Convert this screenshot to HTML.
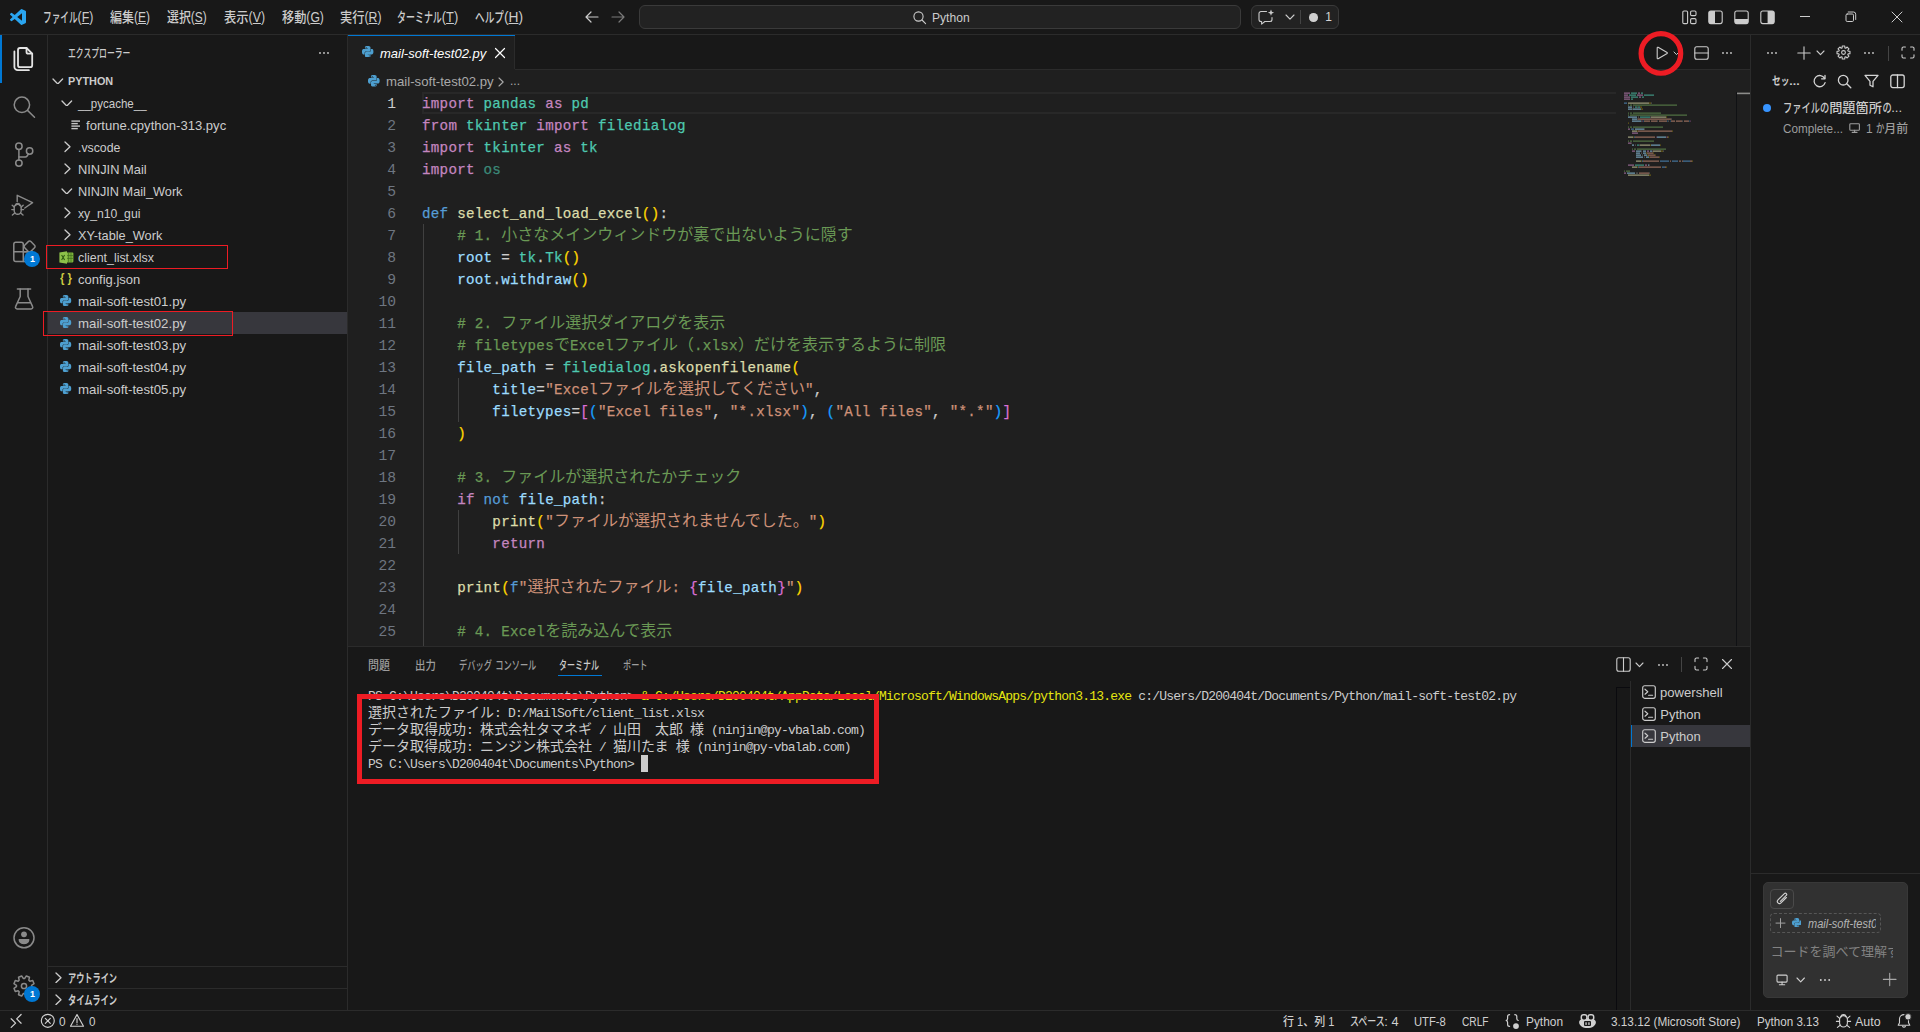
<!DOCTYPE html>
<html lang="ja"><head><meta charset="utf-8"><title>mail-soft-test02.py - Python - Visual Studio Code</title>
<style>
html,body{margin:0;padding:0;background:#181818;}
body{width:1920px;height:1032px;overflow:hidden;position:relative;font-family:"Liberation Sans","Noto Sans CJK JP",sans-serif;}
.b{position:absolute;display:block;}
.t{position:absolute;display:block;white-space:pre;line-height:20px;height:20px;transform-origin:0 50%;}
.cl{position:absolute;left:422px;height:22px;line-height:22px;white-space:pre;font-family:"Liberation Mono","Noto Sans CJK JP",monospace;font-size:14.2px;letter-spacing:0.28px;-webkit-text-stroke:0.25px;color:#ccc;}
.cl i{font-style:normal;font-size:16px;line-height:0;letter-spacing:0;-webkit-text-stroke:0;}
.ln{position:absolute;left:348px;width:48px;text-align:right;height:22px;line-height:22px;font-family:"Liberation Mono","Noto Sans CJK JP",monospace;font-size:14.667px;color:#6e7681;}
.tl{position:absolute;left:368px;height:17px;line-height:17px;white-space:pre;font-family:"Liberation Mono","Noto Sans CJK JP",monospace;font-size:13px;letter-spacing:-0.8px;color:#ccc;}
.tl i{font-style:normal;font-size:14px;line-height:0;letter-spacing:0;}
.t b{font-weight:inherit;display:inline-block;transform:scaleX(.70);transform-origin:0 50%;}
u{text-decoration:underline;text-underline-offset:1px;}
</style></head>
<body>
<div class="b" style="left:0px;top:0px;width:1920px;height:1032px;background:#181818"></div>
<div class="b" style="left:348px;top:70px;width:1403px;height:576px;background:#1f1f1f"></div>
<div class="b" style="left:0px;top:34px;width:1920px;height:1px;background:#2b2b2b"></div>
<div class="b" style="left:47px;top:35px;width:1px;height:975px;background:#2b2b2b"></div>
<div class="b" style="left:347px;top:35px;width:1px;height:975px;background:#2b2b2b"></div>
<div class="b" style="left:1750px;top:35px;width:1px;height:975px;background:#2b2b2b"></div>
<div class="b" style="left:0px;top:1010px;width:1920px;height:1px;background:#2b2b2b"></div>
<div class="b" style="left:348px;top:69px;width:1402px;height:1px;background:#2b2b2b"></div>
<div class="b" style="left:348px;top:646px;width:1402px;height:1px;background:#2b2b2b"></div>
<svg class="b" style="left:10px;top:9px" width="16" height="16" viewBox="0 0 24 24"><path fill="#2aa5f0" d="M23.15 2.587L18.21.21a1.494 1.494 0 0 0-1.705.29l-9.46 8.63-4.12-3.128a.999.999 0 0 0-1.276.057L.327 7.261A1 1 0 0 0 .326 8.74L3.899 12 .326 15.26a1 1 0 0 0 .001 1.479L1.65 17.94a.999.999 0 0 0 1.276.057l4.12-3.128 9.46 8.63a1.492 1.492 0 0 0 1.704.29l4.942-2.377A1.5 1.5 0 0 0 24 20.06V3.939a1.5 1.5 0 0 0-.85-1.352zm-5.146 14.861L10.826 12l7.178-5.448v10.896z"/></svg>
<span class="t" id="t1" style="left:43px;top:7px;font-size:14px;color:#ccc;font-weight:500;transform:scaleX(0.8808);"><b style="margin-right:-16.80px">ファイル</b>(<u>F</u>)</span>
<span class="t" id="t2" style="left:110px;top:7px;font-size:14px;color:#ccc;font-weight:500;transform:scaleX(0.8568);">編集(<u>E</u>)</span>
<span class="t" id="t3" style="left:167px;top:7px;font-size:14px;color:#ccc;font-weight:500;transform:scaleX(0.8503);">選択(<u>S</u>)</span>
<span class="t" id="t4" style="left:223.7px;top:7px;font-size:14px;color:#ccc;font-weight:500;transform:scaleX(0.8782);">表示(<u>V</u>)</span>
<span class="t" id="t5" style="left:281.5px;top:7px;font-size:14px;color:#ccc;font-weight:500;transform:scaleX(0.8687);">移動(<u>G</u>)</span>
<span class="t" id="t6" style="left:339.8px;top:7px;font-size:14px;color:#ccc;font-weight:500;transform:scaleX(0.8743);">実行(<u>R</u>)</span>
<span class="t" id="t7" style="left:397.4px;top:7px;font-size:14px;color:#ccc;font-weight:500;transform:scaleX(0.9147);"><b style="margin-right:-21.00px">ターミナル</b>(<u>T</u>)</span>
<span class="t" id="t8" style="left:475px;top:7px;font-size:14px;color:#ccc;font-weight:500;transform:scaleX(0.9841);"><b style="margin-right:-12.60px">ヘルプ</b>(<u>H</u>)</span>
<svg class="b" style="left:584px;top:10px;" width="16" height="14" viewBox="0 0 16 14" fill="none" stroke="#ccc" stroke-width="1.2" stroke-linecap="round" stroke-linejoin="round"><path d="M14 7H2M7 2L2 7l5 5"/></svg>
<svg class="b" style="left:610px;top:10px;" width="16" height="14" viewBox="0 0 16 14" fill="none" stroke="#7a7a7a" stroke-width="1.2" stroke-linecap="round" stroke-linejoin="round"><path d="M2 7h12M9 2l5 5-5 5"/></svg>
<div class="b" style="left:639px;top:5px;width:602px;height:24px;box-sizing:border-box;background:#222222;border:1px solid #3a3a3a;border-radius:6px"></div>
<svg class="b" style="left:912px;top:10px;" width="15" height="15" viewBox="0 0 15 15" fill="none" stroke="#ccc" stroke-width="1.1" stroke-linecap="round" stroke-linejoin="round"><circle cx="6.5" cy="6.5" r="4.6"/><path d="M10 10l3.6 3.6"/></svg>
<span class="t" id="t9" style="left:932px;top:7.5px;font-size:12px;color:#ccc;transform:scaleX(1.0064);">Python</span>
<div class="b" style="left:1251px;top:5px;width:88px;height:24px;box-sizing:border-box;background:#222222;border:1px solid #3a3a3a;border-radius:6px"></div>
<svg class="b" style="left:1257px;top:9px;" width="20" height="17" viewBox="0 0 20 17" fill="none" stroke="#ccc" stroke-width="1.1" stroke-linecap="round" stroke-linejoin="round"><path d="M9.5 2.5H4a2 2 0 0 0-2 2v6a2 2 0 0 0 2 2h0.6v2.6l3.2-2.6H13a2 2 0 0 0 2-2V8.5"/><path fill="#ccc" stroke="none" d="M14 0.6l.9 2.2 2.2.9-2.2.9-.9 2.2-.9-2.2-2.2-.9 2.2-.9z"/></svg>
<svg class="b" style="left:1284.5px;top:14.42px;" width="10" height="6.16" viewBox="0 0 10 6.16" fill="none" stroke="#ccc" stroke-width="1.1" stroke-linecap="round" stroke-linejoin="round"><path d="M1 1 L5 5.16 L9 1"/></svg>
<div class="b" style="left:1300px;top:10px;width:1px;height:14px;background:#444"></div>
<div class="b" style="left:1309.3px;top:13px;width:8.6px;height:8.6px;background:#d0d0d0;border-radius:50%"></div>
<span class="t" id="t10" style="left:1325.2px;top:7.2px;font-size:12px;color:#d4d4d4;">1</span>
<svg class="b" style="left:1681.5px;top:10px;" width="16" height="15" viewBox="0 0 16 15" fill="none" stroke="#ccc" stroke-width="1.1" stroke-linecap="round" stroke-linejoin="round"><rect x="0.800" y="1" width="4.800" height="12.600" rx="1.200"/><rect x="8.600" y="1" width="5.400" height="4.600" rx="1.200"/><rect x="8.600" y="8.600" width="5.400" height="5" rx="1.200"/></svg>
<svg class="b" style="left:1707.5px;top:10px;" width="16" height="15" viewBox="0 0 16 15" fill="none" stroke="#ccc" stroke-width="1.1" stroke-linecap="round" stroke-linejoin="round"><rect x="0.800" y="1" width="13.400" height="12.600" rx="2"/><path fill="#ccc" stroke="none" d="M2.600 1h4.400v12.600h-4.400a1.800 1.800 0 0 1-1.800-1.800V2.800A1.800 1.800 0 0 1 2.600 1z"/></svg>
<svg class="b" style="left:1733.5px;top:10px;" width="16" height="15" viewBox="0 0 16 15" fill="none" stroke="#ccc" stroke-width="1.1" stroke-linecap="round" stroke-linejoin="round"><rect x="0.800" y="1" width="13.400" height="12.600" rx="2"/><path fill="#ccc" stroke="none" d="M0.800 9h13.400v2.800a1.800 1.800 0 0 1-1.800 1.800H2.600a1.800 1.800 0 0 1-1.800-1.800z"/></svg>
<svg class="b" style="left:1759.5px;top:10px;" width="16" height="15" viewBox="0 0 16 15" fill="none" stroke="#ccc" stroke-width="1.1" stroke-linecap="round" stroke-linejoin="round"><rect x="0.800" y="1" width="13.400" height="12.600" rx="2"/><path fill="#ccc" stroke="none" d="M7.600 1h4.800a1.800 1.800 0 0 1 1.800 1.800v9a1.800 1.800 0 0 1-1.800 1.800h-4.800z"/></svg>
<div class="b" style="left:1800px;top:16px;width:10px;height:1px;background:#ccc"></div>
<svg class="b" style="left:1845px;top:11px;" width="12" height="12" viewBox="0 0 12 12" fill="none" stroke="#ccc" stroke-width="1" stroke-linecap="round" stroke-linejoin="round"><rect x="1" y="3" width="7.5" height="7.5" rx="1.2"/><path d="M3.2 1h5.3a2.2 2.2 0 0 1 2.2 2.2v5.3"/></svg>
<svg class="b" style="left:1891px;top:11px;" width="12" height="12" viewBox="0 0 12 12" fill="none" stroke="#ccc" stroke-width="1" stroke-linecap="round" stroke-linejoin="round"><path d="M1 1l10 10M11 1L1 11"/></svg>
<div class="b" style="left:0px;top:35px;width:2px;height:48px;background:#0078d4"></div>
<svg class="b" style="left:10px;top:44px;" width="28" height="30" viewBox="10 44 28 30" fill="none" stroke="#e4e4e4" stroke-width="1.8" stroke-linecap="round" stroke-linejoin="round"><path d="M20 48h6.500l5.700 5.700v11.500a2 2 0 0 1-2 2H20a2 2 0 0 1-2-2V50a2 2 0 0 1 2-2z"/><path d="M26.500 48v3.900a1.800 1.800 0 0 0 1.800 1.800h3.900"/><path d="M14.400 51.500v15.400a3.300 3.300 0 0 0 3.300 3.300h11.200"/></svg>
<svg class="b" style="left:10px;top:92px;" width="28" height="30" viewBox="10 92 28 30" fill="none" stroke="#8a8a8a" stroke-width="1.5" stroke-linecap="round" stroke-linejoin="round"><circle cx="21.900" cy="104.800" r="7.700"/><path d="M27.500 110.400l7 6.800"/></svg>
<svg class="b" style="left:10px;top:140px;" width="28" height="30" viewBox="10 140 28 30" fill="none" stroke="#8a8a8a" stroke-width="1.5" stroke-linecap="round" stroke-linejoin="round"><circle cx="18.900" cy="146.300" r="3.200"/><circle cx="29.600" cy="151" r="3.200"/><circle cx="18.900" cy="163.100" r="3.200"/><path d="M18.900 149.500v10.400"/><path d="M28.500 154l-1.600 2.200a2 2 0 0 1-1.600.8H18.900"/></svg>
<svg class="b" style="left:9px;top:190px;" width="29" height="30" viewBox="9 190 29 30" fill="none" stroke="#8a8a8a" stroke-width="1.4" stroke-linecap="round" stroke-linejoin="round"><path d="M17.200 201.500v-6.200l15.400 7.300-7.800 5.400"/><path d="M14.200 207.800a3.500 3.500 0 0 1 7 0v3a3.500 3.500 0 0 1-7 0z"/><path d="M15.600 205.600a2.100 2.100 0 0 1 4.200 0"/><path d="M14.200 207l-2-1.700M21.200 207l2-1.700M14.200 209.600h-2.400M21.200 209.600h2.400M14.800 213l-2.400 2M20.600 213l2.400 2"/></svg>
<svg class="b" style="left:10px;top:237px;" width="28" height="29" viewBox="10 237 28 29" fill="none" stroke="#8a8a8a" stroke-width="1.5" stroke-linecap="round" stroke-linejoin="round"><path d="M23.300 261.400H15.800a2 2 0 0 1-2-2V244.300a2 2 0 0 1 2-2h5.500a2 2 0 0 1 2 2z"/><path d="M13.800 251.700h18.700"/><path d="M23.300 251.700h7.200a2 2 0 0 1 2 2v5.700a2 2 0 0 1-2 2h-7.200"/><path d="M28.300 241.600a1.800 1.800 0 0 1 2.600 0l3.600 3.600a1.800 1.800 0 0 1 0 2.600l-3.600 3.600a1.800 1.800 0 0 1-2.600 0l-3.600-3.600a1.800 1.800 0 0 1 0-2.600z"/></svg>
<div class="b" style="left:24.1px;top:251.1px;width:16px;height:16px;background:#0078d4;border-radius:50%"></div>
<span class="t" id="t11" style="left:29.9px;top:249.1px;font-size:9px;color:#fff;font-weight:700;">1</span>
<svg class="b" style="left:10px;top:285px;" width="28" height="28" viewBox="10 285 28 28" fill="none" stroke="#8a8a8a" stroke-width="1.5" stroke-linecap="round" stroke-linejoin="round"><path d="M17.400 288.900h13.200"/><path d="M20.200 288.900v7.600L15.600 306.600a1.600 1.600 0 0 0 1.500 2.300h14a1.600 1.600 0 0 0 1.500-2.300L28 296.500v-7.600"/><path d="M17.900 302.800h12.500"/></svg>
<svg class="b" style="left:10px;top:924px;" width="28" height="28" viewBox="10 924 28 28" fill="none" stroke="#8a8a8a" stroke-width="1.5" stroke-linecap="round" stroke-linejoin="round"><circle cx="24" cy="937.800" r="10"/><circle cx="24" cy="934.300" r="2.900" fill="#8a8a8a" stroke="none"/><path fill="#8a8a8a" stroke="none" d="M18.700 939h10.600v1.300c0 2.400-2.400 3.900-5.300 3.900s-5.300-1.500-5.300-3.900z"/></svg>
<svg class="b" style="left:10px;top:972px;" width="28" height="28" viewBox="10 972 28 28" fill="none" stroke="#8a8a8a" stroke-width="1.5" stroke-linecap="round" stroke-linejoin="round"><path d="M34.04 988.32L32.73 991.46L29.86 990.83L28.83 991.86L29.46 994.73L26.32 996.04L24.73 993.57L23.27 993.57L21.68 996.04L18.54 994.73L19.17 991.86L18.14 990.83L15.27 991.46L13.96 988.32L16.43 986.73L16.43 985.27L13.96 983.68L15.27 980.54L18.14 981.17L19.17 980.14L18.54 977.27L21.68 975.96L23.27 978.43L24.73 978.43L26.32 975.96L29.46 977.27L28.83 980.14L29.86 981.17L32.73 980.54L34.04 983.68L31.57 985.27L31.57 986.73Z"/><circle cx="24" cy="986" r="2.600"/></svg>
<div class="b" style="left:24.1px;top:985.8px;width:16px;height:16px;background:#0078d4;border-radius:50%"></div>
<span class="t" id="t12" style="left:29.9px;top:983.8px;font-size:9px;color:#fff;font-weight:700;">1</span>
<span class="t" id="t13" style="left:67.8px;top:44.3px;font-size:12px;color:#ccc;font-weight:500;transform:scaleX(0.9319);"><b style="margin-right:-28.80px">エクスプローラー</b></span>
<svg class="b" style="left:317px;top:51.3px" width="14" height="4" viewBox="0 0 14 4"><g fill="#ccc"><circle cx="3" cy="2" r="0.9"/><circle cx="7" cy="2" r="0.9"/><circle cx="11" cy="2" r="0.9"/></g></svg>
<svg class="b" style="left:52.3px;top:77.504px;" width="11.6" height="6.992" viewBox="0 0 11.6 6.992" fill="none" stroke="#ccc" stroke-width="1.3" stroke-linecap="round" stroke-linejoin="round"><path d="M1 1 L5.8 5.992 L10.6 1"/></svg>
<span class="t" id="t14" style="left:68.2px;top:71px;font-size:11px;color:#ccc;font-weight:700;transform:scaleX(0.9860);">PYTHON</span>
<div class="b" style="left:48px;top:312px;width:299px;height:22px;background:#37373d"></div>
<svg class="b" style="left:61.2px;top:99.504px;" width="11.6" height="6.992" viewBox="0 0 11.6 6.992" fill="none" stroke="#ccc" stroke-width="1.3" stroke-linecap="round" stroke-linejoin="round"><path d="M1 1 L5.8 5.992 L10.6 1"/></svg>
<span class="t" id="t15" style="left:78.1px;top:93.5px;font-size:13px;color:#ccc;transform:scaleX(0.8869);">__pycache__</span>
<svg class="b" style="left:71px;top:119.5px" width="10" height="10" viewBox="0 0 10 10"><g fill="#c5c5c5"><rect x="0.4" y="0.4" width="8.6" height="1.4"/><rect x="0.4" y="2.9" width="6.4" height="1.4"/><rect x="0.4" y="5.4" width="8.6" height="1.4"/><rect x="0.4" y="7.9" width="6.4" height="1.4"/></g></svg>
<span class="t" id="t16" style="left:86.2px;top:115.5px;font-size:13px;color:#ccc;transform:scaleX(1.0051);">fortune.cpython-313.pyc</span>
<svg class="b" style="left:63.604px;top:141.2px;" width="6.992" height="11.6" viewBox="0 0 6.992 11.6" fill="none" stroke="#ccc" stroke-width="1.3" stroke-linecap="round" stroke-linejoin="round"><path d="M1 1 L5.992 5.8 L1 10.6"/></svg>
<span class="t" id="t17" style="left:78.1px;top:137.5px;font-size:13px;color:#ccc;transform:scaleX(0.9462);">.vscode</span>
<svg class="b" style="left:63.604px;top:163.2px;" width="6.992" height="11.6" viewBox="0 0 6.992 11.6" fill="none" stroke="#ccc" stroke-width="1.3" stroke-linecap="round" stroke-linejoin="round"><path d="M1 1 L5.992 5.8 L1 10.6"/></svg>
<span class="t" id="t18" style="left:78.1px;top:159.5px;font-size:13px;color:#ccc;transform:scaleX(0.9893);">NINJIN Mail</span>
<svg class="b" style="left:61.2px;top:187.504px;" width="11.6" height="6.992" viewBox="0 0 11.6 6.992" fill="none" stroke="#ccc" stroke-width="1.3" stroke-linecap="round" stroke-linejoin="round"><path d="M1 1 L5.8 5.992 L10.6 1"/></svg>
<span class="t" id="t19" style="left:78.1px;top:181.5px;font-size:13px;color:#ccc;transform:scaleX(0.9796);">NINJIN Mail_Work</span>
<svg class="b" style="left:63.604px;top:207.2px;" width="6.992" height="11.6" viewBox="0 0 6.992 11.6" fill="none" stroke="#ccc" stroke-width="1.3" stroke-linecap="round" stroke-linejoin="round"><path d="M1 1 L5.992 5.8 L1 10.6"/></svg>
<span class="t" id="t20" style="left:78.1px;top:203.5px;font-size:13px;color:#ccc;transform:scaleX(0.9383);">xy_n10_gui</span>
<svg class="b" style="left:63.604px;top:229.2px;" width="6.992" height="11.6" viewBox="0 0 6.992 11.6" fill="none" stroke="#ccc" stroke-width="1.3" stroke-linecap="round" stroke-linejoin="round"><path d="M1 1 L5.992 5.8 L1 10.6"/></svg>
<span class="t" id="t21" style="left:78.1px;top:225.5px;font-size:13px;color:#ccc;transform:scaleX(0.9802);">XY-table_Work</span>
<svg class="b" style="left:59px;top:250.8px" width="15" height="13" viewBox="0 0 15 13"><rect x="6" y="1.6" width="8.4" height="9.8" rx="0.8" fill="#7fb43c"/><g stroke="#3d6a1c" stroke-width="0.7"><path d="M6 4.6h8.4M6 7.4h8.4M9.6 1.6v9.8M12 1.6v9.8"/></g><path d="M0.4 1.6L8 0.3v12.4L0.4 11.4z" fill="#8dc149"/><path d="M2.6 4l3 5M5.6 4l-3 5" stroke="#2f5a14" stroke-width="1.1"/></svg>
<span class="t" id="t22" style="left:78.1px;top:247.5px;font-size:13px;color:#ccc;transform:scaleX(0.9551);">client_list.xlsx</span>
<span class="t" id="t23" style="left:59.8px;top:267.9px;font-size:12.5px;color:#cbcb41;font-weight:700;transform:scaleX(0.9089);">{ }</span>
<span class="t" id="t24" style="left:78.1px;top:269.5px;font-size:13px;color:#ccc;">config.json</span>
<svg class="b" style="left:60.4px;top:295.3px" width="11.2" height="11.2" viewBox="0 0 24 24"><path fill="#4d9fd0" d="M14.25.18l.9.2.73.26.59.3.45.32.34.34.25.34.16.33.1.3.04.26.02.2-.01.13V8.5l-.05.63-.13.55-.21.46-.26.38-.3.31-.33.25-.35.19-.35.14-.33.1-.3.07-.26.04-.21.02H8.77l-.69.05-.59.14-.5.22-.41.27-.33.32-.27.35-.2.36-.15.37-.1.35-.07.32-.04.27-.02.21v3.06H3.17l-.21-.03-.28-.07-.32-.12-.35-.18-.36-.26-.36-.36-.35-.46-.32-.59-.28-.73-.21-.88-.14-1.05-.05-1.23.06-1.22.16-1.04.24-.87.32-.71.36-.57.4-.44.42-.33.42-.24.4-.16.36-.1.32-.05.24-.01h.16l.06.01h8.16v-.83H6.18l-.01-2.75-.02-.37.05-.34.11-.31.17-.28.25-.26.31-.23.38-.2.44-.18.51-.15.58-.12.64-.1.71-.06.77-.04.84-.02 1.27.05zm-6.3 1.98l-.23.33-.08.41.08.41.23.34.33.22.41.09.41-.09.33-.22.23-.34.08-.41-.08-.41-.23-.33-.33-.22-.41-.09-.41.09zm13.09 3.95l.28.06.32.12.35.18.36.27.36.35.35.47.32.59.28.73.21.88.14 1.04.05 1.23-.06 1.23-.16 1.04-.24.86-.32.71-.36.57-.4.45-.42.33-.42.24-.4.16-.36.09-.32.05-.24.02-.16-.01h-8.22v.82h5.84l.01 2.76.02.36-.05.34-.11.31-.17.29-.25.25-.31.24-.38.2-.44.17-.51.15-.58.13-.64.09-.71.07-.77.04-.84.01-1.27-.04-1.07-.14-.9-.2-.73-.25-.59-.3-.45-.33-.34-.34-.25-.34-.16-.33-.1-.3-.04-.25-.02-.2.01-.13v-5.34l.05-.64.13-.54.21-.46.26-.38.3-.32.33-.24.35-.2.35-.14.33-.1.3-.06.26-.04.21-.02.13-.01h5.84l.69-.05.59-.14.5-.21.41-.28.33-.32.27-.35.2-.36.15-.36.1-.35.07-.32.04-.28.02-.21V6.07h2.09l.14.01zm-6.47 14.25l-.23.33-.08.41.08.41.23.33.33.23.41.08.41-.08.33-.23.23-.33.08-.41-.08-.41-.23-.33-.33-.23-.41-.08-.41.08z"/></svg>
<span class="t" id="t25" style="left:78.1px;top:291.5px;font-size:13px;color:#ccc;transform:scaleX(1.0179);">mail-soft-test01.py</span>
<svg class="b" style="left:60.4px;top:317.3px" width="11.2" height="11.2" viewBox="0 0 24 24"><path fill="#4d9fd0" d="M14.25.18l.9.2.73.26.59.3.45.32.34.34.25.34.16.33.1.3.04.26.02.2-.01.13V8.5l-.05.63-.13.55-.21.46-.26.38-.3.31-.33.25-.35.19-.35.14-.33.1-.3.07-.26.04-.21.02H8.77l-.69.05-.59.14-.5.22-.41.27-.33.32-.27.35-.2.36-.15.37-.1.35-.07.32-.04.27-.02.21v3.06H3.17l-.21-.03-.28-.07-.32-.12-.35-.18-.36-.26-.36-.36-.35-.46-.32-.59-.28-.73-.21-.88-.14-1.05-.05-1.23.06-1.22.16-1.04.24-.87.32-.71.36-.57.4-.44.42-.33.42-.24.4-.16.36-.1.32-.05.24-.01h.16l.06.01h8.16v-.83H6.18l-.01-2.75-.02-.37.05-.34.11-.31.17-.28.25-.26.31-.23.38-.2.44-.18.51-.15.58-.12.64-.1.71-.06.77-.04.84-.02 1.27.05zm-6.3 1.98l-.23.33-.08.41.08.41.23.34.33.22.41.09.41-.09.33-.22.23-.34.08-.41-.08-.41-.23-.33-.33-.22-.41-.09-.41.09zm13.09 3.95l.28.06.32.12.35.18.36.27.36.35.35.47.32.59.28.73.21.88.14 1.04.05 1.23-.06 1.23-.16 1.04-.24.86-.32.71-.36.57-.4.45-.42.33-.42.24-.4.16-.36.09-.32.05-.24.02-.16-.01h-8.22v.82h5.84l.01 2.76.02.36-.05.34-.11.31-.17.29-.25.25-.31.24-.38.2-.44.17-.51.15-.58.13-.64.09-.71.07-.77.04-.84.01-1.27-.04-1.07-.14-.9-.2-.73-.25-.59-.3-.45-.33-.34-.34-.25-.34-.16-.33-.1-.3-.04-.25-.02-.2.01-.13v-5.34l.05-.64.13-.54.21-.46.26-.38.3-.32.33-.24.35-.2.35-.14.33-.1.3-.06.26-.04.21-.02.13-.01h5.84l.69-.05.59-.14.5-.21.41-.28.33-.32.27-.35.2-.36.15-.36.1-.35.07-.32.04-.28.02-.21V6.07h2.09l.14.01zm-6.47 14.25l-.23.33-.08.41.08.41.23.33.33.23.41.08.41-.08.33-.23.23-.33.08-.41-.08-.41-.23-.33-.33-.23-.41-.08-.41.08z"/></svg>
<span class="t" id="t26" style="left:78.1px;top:313.5px;font-size:13px;color:#ccc;transform:scaleX(1.0179);">mail-soft-test02.py</span>
<svg class="b" style="left:60.4px;top:339.3px" width="11.2" height="11.2" viewBox="0 0 24 24"><path fill="#4d9fd0" d="M14.25.18l.9.2.73.26.59.3.45.32.34.34.25.34.16.33.1.3.04.26.02.2-.01.13V8.5l-.05.63-.13.55-.21.46-.26.38-.3.31-.33.25-.35.19-.35.14-.33.1-.3.07-.26.04-.21.02H8.77l-.69.05-.59.14-.5.22-.41.27-.33.32-.27.35-.2.36-.15.37-.1.35-.07.32-.04.27-.02.21v3.06H3.17l-.21-.03-.28-.07-.32-.12-.35-.18-.36-.26-.36-.36-.35-.46-.32-.59-.28-.73-.21-.88-.14-1.05-.05-1.23.06-1.22.16-1.04.24-.87.32-.71.36-.57.4-.44.42-.33.42-.24.4-.16.36-.1.32-.05.24-.01h.16l.06.01h8.16v-.83H6.18l-.01-2.75-.02-.37.05-.34.11-.31.17-.28.25-.26.31-.23.38-.2.44-.18.51-.15.58-.12.64-.1.71-.06.77-.04.84-.02 1.27.05zm-6.3 1.98l-.23.33-.08.41.08.41.23.34.33.22.41.09.41-.09.33-.22.23-.34.08-.41-.08-.41-.23-.33-.33-.22-.41-.09-.41.09zm13.09 3.95l.28.06.32.12.35.18.36.27.36.35.35.47.32.59.28.73.21.88.14 1.04.05 1.23-.06 1.23-.16 1.04-.24.86-.32.71-.36.57-.4.45-.42.33-.42.24-.4.16-.36.09-.32.05-.24.02-.16-.01h-8.22v.82h5.84l.01 2.76.02.36-.05.34-.11.31-.17.29-.25.25-.31.24-.38.2-.44.17-.51.15-.58.13-.64.09-.71.07-.77.04-.84.01-1.27-.04-1.07-.14-.9-.2-.73-.25-.59-.3-.45-.33-.34-.34-.25-.34-.16-.33-.1-.3-.04-.25-.02-.2.01-.13v-5.34l.05-.64.13-.54.21-.46.26-.38.3-.32.33-.24.35-.2.35-.14.33-.1.3-.06.26-.04.21-.02.13-.01h5.84l.69-.05.59-.14.5-.21.41-.28.33-.32.27-.35.2-.36.15-.36.1-.35.07-.32.04-.28.02-.21V6.07h2.09l.14.01zm-6.47 14.25l-.23.33-.08.41.08.41.23.33.33.23.41.08.41-.08.33-.23.23-.33.08-.41-.08-.41-.23-.33-.33-.23-.41-.08-.41.08z"/></svg>
<span class="t" id="t27" style="left:78.1px;top:335.5px;font-size:13px;color:#ccc;transform:scaleX(1.0179);">mail-soft-test03.py</span>
<svg class="b" style="left:60.4px;top:361.3px" width="11.2" height="11.2" viewBox="0 0 24 24"><path fill="#4d9fd0" d="M14.25.18l.9.2.73.26.59.3.45.32.34.34.25.34.16.33.1.3.04.26.02.2-.01.13V8.5l-.05.63-.13.55-.21.46-.26.38-.3.31-.33.25-.35.19-.35.14-.33.1-.3.07-.26.04-.21.02H8.77l-.69.05-.59.14-.5.22-.41.27-.33.32-.27.35-.2.36-.15.37-.1.35-.07.32-.04.27-.02.21v3.06H3.17l-.21-.03-.28-.07-.32-.12-.35-.18-.36-.26-.36-.36-.35-.46-.32-.59-.28-.73-.21-.88-.14-1.05-.05-1.23.06-1.22.16-1.04.24-.87.32-.71.36-.57.4-.44.42-.33.42-.24.4-.16.36-.1.32-.05.24-.01h.16l.06.01h8.16v-.83H6.18l-.01-2.75-.02-.37.05-.34.11-.31.17-.28.25-.26.31-.23.38-.2.44-.18.51-.15.58-.12.64-.1.71-.06.77-.04.84-.02 1.27.05zm-6.3 1.98l-.23.33-.08.41.08.41.23.34.33.22.41.09.41-.09.33-.22.23-.34.08-.41-.08-.41-.23-.33-.33-.22-.41-.09-.41.09zm13.09 3.95l.28.06.32.12.35.18.36.27.36.35.35.47.32.59.28.73.21.88.14 1.04.05 1.23-.06 1.23-.16 1.04-.24.86-.32.71-.36.57-.4.45-.42.33-.42.24-.4.16-.36.09-.32.05-.24.02-.16-.01h-8.22v.82h5.84l.01 2.76.02.36-.05.34-.11.31-.17.29-.25.25-.31.24-.38.2-.44.17-.51.15-.58.13-.64.09-.71.07-.77.04-.84.01-1.27-.04-1.07-.14-.9-.2-.73-.25-.59-.3-.45-.33-.34-.34-.25-.34-.16-.33-.1-.3-.04-.25-.02-.2.01-.13v-5.34l.05-.64.13-.54.21-.46.26-.38.3-.32.33-.24.35-.2.35-.14.33-.1.3-.06.26-.04.21-.02.13-.01h5.84l.69-.05.59-.14.5-.21.41-.28.33-.32.27-.35.2-.36.15-.36.1-.35.07-.32.04-.28.02-.21V6.07h2.09l.14.01zm-6.47 14.25l-.23.33-.08.41.08.41.23.33.33.23.41.08.41-.08.33-.23.23-.33.08-.41-.08-.41-.23-.33-.33-.23-.41-.08-.41.08z"/></svg>
<span class="t" id="t28" style="left:78.1px;top:357.5px;font-size:13px;color:#ccc;transform:scaleX(1.0179);">mail-soft-test04.py</span>
<svg class="b" style="left:60.4px;top:383.3px" width="11.2" height="11.2" viewBox="0 0 24 24"><path fill="#4d9fd0" d="M14.25.18l.9.2.73.26.59.3.45.32.34.34.25.34.16.33.1.3.04.26.02.2-.01.13V8.5l-.05.63-.13.55-.21.46-.26.38-.3.31-.33.25-.35.19-.35.14-.33.1-.3.07-.26.04-.21.02H8.77l-.69.05-.59.14-.5.22-.41.27-.33.32-.27.35-.2.36-.15.37-.1.35-.07.32-.04.27-.02.21v3.06H3.17l-.21-.03-.28-.07-.32-.12-.35-.18-.36-.26-.36-.36-.35-.46-.32-.59-.28-.73-.21-.88-.14-1.05-.05-1.23.06-1.22.16-1.04.24-.87.32-.71.36-.57.4-.44.42-.33.42-.24.4-.16.36-.1.32-.05.24-.01h.16l.06.01h8.16v-.83H6.18l-.01-2.75-.02-.37.05-.34.11-.31.17-.28.25-.26.31-.23.38-.2.44-.18.51-.15.58-.12.64-.1.71-.06.77-.04.84-.02 1.27.05zm-6.3 1.98l-.23.33-.08.41.08.41.23.34.33.22.41.09.41-.09.33-.22.23-.34.08-.41-.08-.41-.23-.33-.33-.22-.41-.09-.41.09zm13.09 3.95l.28.06.32.12.35.18.36.27.36.35.35.47.32.59.28.73.21.88.14 1.04.05 1.23-.06 1.23-.16 1.04-.24.86-.32.71-.36.57-.4.45-.42.33-.42.24-.4.16-.36.09-.32.05-.24.02-.16-.01h-8.22v.82h5.84l.01 2.76.02.36-.05.34-.11.31-.17.29-.25.25-.31.24-.38.2-.44.17-.51.15-.58.13-.64.09-.71.07-.77.04-.84.01-1.27-.04-1.07-.14-.9-.2-.73-.25-.59-.3-.45-.33-.34-.34-.25-.34-.16-.33-.1-.3-.04-.25-.02-.2.01-.13v-5.34l.05-.64.13-.54.21-.46.26-.38.3-.32.33-.24.35-.2.35-.14.33-.1.3-.06.26-.04.21-.02.13-.01h5.84l.69-.05.59-.14.5-.21.41-.28.33-.32.27-.35.2-.36.15-.36.1-.35.07-.32.04-.28.02-.21V6.07h2.09l.14.01zm-6.47 14.25l-.23.33-.08.41.08.41.23.33.33.23.41.08.41-.08.33-.23.23-.33.08-.41-.08-.41-.23-.33-.33-.23-.41-.08-.41.08z"/></svg>
<span class="t" id="t29" style="left:78.1px;top:379.5px;font-size:13px;color:#ccc;transform:scaleX(1.0179);">mail-soft-test05.py</span>
<div class="b" style="left:46px;top:245px;width:182px;height:24px;box-sizing:border-box;border:1.2px solid #ed1c24"></div>
<div class="b" style="left:43px;top:311px;width:190px;height:25px;box-sizing:border-box;border:1.2px solid #ed1c24"></div>
<div class="b" style="left:48px;top:966px;width:299px;height:1px;background:#2b2b2b"></div>
<div class="b" style="left:48px;top:988px;width:299px;height:1px;background:#2b2b2b"></div>
<svg class="b" style="left:54.804px;top:971.8px;" width="6.992" height="11.6" viewBox="0 0 6.992 11.6" fill="none" stroke="#ccc" stroke-width="1.3" stroke-linecap="round" stroke-linejoin="round"><path d="M1 1 L5.992 5.8 L1 10.6"/></svg>
<span class="t" id="t30" style="left:67.7px;top:969.2px;font-size:12px;color:#ccc;font-weight:700;transform:scaleX(0.9720);"><b style="margin-right:-21.60px">アウトライン</b></span>
<svg class="b" style="left:54.804px;top:993.8px;" width="6.992" height="11.6" viewBox="0 0 6.992 11.6" fill="none" stroke="#ccc" stroke-width="1.3" stroke-linecap="round" stroke-linejoin="round"><path d="M1 1 L5.992 5.8 L1 10.6"/></svg>
<span class="t" id="t31" style="left:67.7px;top:991.2px;font-size:12px;color:#ccc;font-weight:700;transform:scaleX(0.9835);"><b style="margin-right:-21.60px">タイムライン</b></span>
<div class="b" style="left:348px;top:35px;width:167px;height:35px;background:#1f1f1f"></div>
<div class="b" style="left:348px;top:35px;width:167px;height:1px;background:#0078d4"></div>
<div class="b" style="left:514px;top:36px;width:1px;height:33px;background:#2b2b2b"></div>
<svg class="b" style="left:362.3px;top:46px" width="11.4" height="11.4" viewBox="0 0 24 24"><path fill="#4d9fd0" d="M14.25.18l.9.2.73.26.59.3.45.32.34.34.25.34.16.33.1.3.04.26.02.2-.01.13V8.5l-.05.63-.13.55-.21.46-.26.38-.3.31-.33.25-.35.19-.35.14-.33.1-.3.07-.26.04-.21.02H8.77l-.69.05-.59.14-.5.22-.41.27-.33.32-.27.35-.2.36-.15.37-.1.35-.07.32-.04.27-.02.21v3.06H3.17l-.21-.03-.28-.07-.32-.12-.35-.18-.36-.26-.36-.36-.35-.46-.32-.59-.28-.73-.21-.88-.14-1.05-.05-1.23.06-1.22.16-1.04.24-.87.32-.71.36-.57.4-.44.42-.33.42-.24.4-.16.36-.1.32-.05.24-.01h.16l.06.01h8.16v-.83H6.18l-.01-2.75-.02-.37.05-.34.11-.31.17-.28.25-.26.31-.23.38-.2.44-.18.51-.15.58-.12.64-.1.71-.06.77-.04.84-.02 1.27.05zm-6.3 1.98l-.23.33-.08.41.08.41.23.34.33.22.41.09.41-.09.33-.22.23-.34.08-.41-.08-.41-.23-.33-.33-.22-.41-.09-.41.09zm13.09 3.95l.28.06.32.12.35.18.36.27.36.35.35.47.32.59.28.73.21.88.14 1.04.05 1.23-.06 1.23-.16 1.04-.24.86-.32.71-.36.57-.4.45-.42.33-.42.24-.4.16-.36.09-.32.05-.24.02-.16-.01h-8.22v.82h5.84l.01 2.76.02.36-.05.34-.11.31-.17.29-.25.25-.31.24-.38.2-.44.17-.51.15-.58.13-.64.09-.71.07-.77.04-.84.01-1.27-.04-1.07-.14-.9-.2-.73-.25-.59-.3-.45-.33-.34-.34-.25-.34-.16-.33-.1-.3-.04-.25-.02-.2.01-.13v-5.34l.05-.64.13-.54.21-.46.26-.38.3-.32.33-.24.35-.2.35-.14.33-.1.3-.06.26-.04.21-.02.13-.01h5.84l.69-.05.59-.14.5-.21.41-.28.33-.32.27-.35.2-.36.15-.36.1-.35.07-.32.04-.28.02-.21V6.07h2.09l.14.01zm-6.47 14.25l-.23.33-.08.41.08.41.23.33.33.23.41.08.41-.08.33-.23.23-.33.08-.41-.08-.41-.23-.33-.33-.23-.41-.08-.41.08z"/></svg>
<span class="t" id="t32" style="left:380px;top:43.7px;font-size:13px;color:#fff;font-style:italic;">mail-soft-test02.py</span>
<svg class="b" style="left:494px;top:47px;" width="12" height="12" viewBox="0 0 12 12" fill="none" stroke="#fff" stroke-width="1.2" stroke-linecap="round" stroke-linejoin="round"><path d="M1.5 1.5l9 9M10.500 1.5l-9 9"/></svg>
<svg class="b" style="left:1656px;top:46px;" width="13" height="14" viewBox="0 0 13 14" fill="none" stroke="#ccc" stroke-width="1.1" stroke-linecap="round" stroke-linejoin="round"><path d="M1.2 1.8v10.400a0.6 0.6 0 0 0 .9.500l9-5.200a0.600 0.600 0 0 0 0-1l-9-5.200a0.600 0.600 0 0 0-.9.500z"/></svg>
<svg class="b" style="left:1673px;top:51.2px;" width="7" height="4.6" viewBox="0 0 7 4.6" fill="none" stroke="#ccc" stroke-width="1" stroke-linecap="round" stroke-linejoin="round"><path d="M1 1 L3.5 3.6 L6 1"/></svg>
<svg class="b" style="left:1693.5px;top:46px;" width="15" height="14" viewBox="0 0 15 14" fill="none" stroke="#ccc" stroke-width="1.1" stroke-linecap="round" stroke-linejoin="round"><rect x="0.8" y="0.8" width="13.400" height="12.400" rx="2"/><path d="M0.8 7h13.400"/></svg>
<svg class="b" style="left:1720px;top:51.3px" width="14" height="4" viewBox="0 0 14 4"><g fill="#ccc"><circle cx="3" cy="2" r="0.9"/><circle cx="7" cy="2" r="0.9"/><circle cx="11" cy="2" r="0.9"/></g></svg>
<svg class="b" style="left:1637px;top:30px" width="48" height="48" viewBox="0 0 48 48"><circle cx="23.900" cy="23.450" r="19.800" fill="none" stroke="#ed1c24" stroke-width="5.200"/></svg>
<svg class="b" style="left:368.3px;top:75.3px" width="11.6" height="11.6" viewBox="0 0 24 24"><path fill="#4d9fd0" d="M14.25.18l.9.2.73.26.59.3.45.32.34.34.25.34.16.33.1.3.04.26.02.2-.01.13V8.5l-.05.63-.13.55-.21.46-.26.38-.3.31-.33.25-.35.19-.35.14-.33.1-.3.07-.26.04-.21.02H8.77l-.69.05-.59.14-.5.22-.41.27-.33.32-.27.35-.2.36-.15.37-.1.35-.07.32-.04.27-.02.21v3.06H3.17l-.21-.03-.28-.07-.32-.12-.35-.18-.36-.26-.36-.36-.35-.46-.32-.59-.28-.73-.21-.88-.14-1.05-.05-1.23.06-1.22.16-1.04.24-.87.32-.71.36-.57.4-.44.42-.33.42-.24.4-.16.36-.1.32-.05.24-.01h.16l.06.01h8.16v-.83H6.18l-.01-2.75-.02-.37.05-.34.11-.31.17-.28.25-.26.31-.23.38-.2.44-.18.51-.15.58-.12.64-.1.71-.06.77-.04.84-.02 1.27.05zm-6.3 1.98l-.23.33-.08.41.08.41.23.34.33.22.41.09.41-.09.33-.22.23-.34.08-.41-.08-.41-.23-.33-.33-.22-.41-.09-.41.09zm13.09 3.95l.28.06.32.12.35.18.36.27.36.35.35.47.32.59.28.73.21.88.14 1.04.05 1.23-.06 1.23-.16 1.04-.24.86-.32.71-.36.57-.4.45-.42.33-.42.24-.4.16-.36.09-.32.05-.24.02-.16-.01h-8.22v.82h5.84l.01 2.76.02.36-.05.34-.11.31-.17.29-.25.25-.31.24-.38.2-.44.17-.51.15-.58.13-.64.09-.71.07-.77.04-.84.01-1.27-.04-1.07-.14-.9-.2-.73-.25-.59-.3-.45-.33-.34-.34-.25-.34-.16-.33-.1-.3-.04-.25-.02-.2.01-.13v-5.34l.05-.64.13-.54.21-.46.26-.38.3-.32.33-.24.35-.2.35-.14.33-.1.3-.06.26-.04.21-.02.13-.01h5.84l.69-.05.59-.14.5-.21.41-.28.33-.32.27-.35.2-.36.15-.36.1-.35.07-.32.04-.28.02-.21V6.07h2.09l.14.01zm-6.47 14.25l-.23.33-.08.41.08.41.23.33.33.23.41.08.41-.08.33-.23.23-.33.08-.41-.08-.41-.23-.33-.33-.23-.41-.08-.41.08z"/></svg>
<span class="t" id="t33" style="left:386.3px;top:71.8px;font-size:13px;color:#a9a9a9;transform:scaleX(1.0141);">mail-soft-test02.py</span>
<svg class="b" style="left:498.42px;top:76.5px;" width="6.16" height="10" viewBox="0 0 6.16 10" fill="none" stroke="#a9a9a9" stroke-width="1.1" stroke-linecap="round" stroke-linejoin="round"><path d="M1 1 L5.16 5 L1 9"/></svg>
<span class="t" id="t34" style="left:510px;top:70.8px;font-size:13px;color:#a9a9a9;transform:scaleX(0.9222);">...</span>
<div class="b" style="left:422px;top:92px;width:1194px;height:22px;box-sizing:border-box;border:2px solid #282828;border-right:0"></div>
<div class="b" style="left:423px;top:224px;width:1px;height:422px;background:#404040"></div>
<div class="b" style="left:458px;top:378px;width:1px;height:44px;background:#404040"></div>
<div class="b" style="left:458px;top:510px;width:1px;height:44px;background:#404040"></div>
<div class="ln" style="top:93px;color:#ccc">1</div>
<div class="cl" style="top:93px"><span style="color:#c586c0">import</span> <span style="color:#4ec9b0">pandas</span> <span style="color:#c586c0">as</span> <span style="color:#4ec9b0">pd</span></div>
<div class="ln" style="top:115px">2</div>
<div class="cl" style="top:115px"><span style="color:#c586c0">from</span> <span style="color:#4ec9b0">tkinter</span> <span style="color:#c586c0">import</span> <span style="color:#4ec9b0">filedialog</span></div>
<div class="ln" style="top:137px">3</div>
<div class="cl" style="top:137px"><span style="color:#c586c0">import</span> <span style="color:#4ec9b0">tkinter</span> <span style="color:#c586c0">as</span> <span style="color:#4ec9b0">tk</span></div>
<div class="ln" style="top:159px">4</div>
<div class="cl" style="top:159px"><span style="color:#c586c0">import</span> <span style="color:#4ec9b0;opacity:.62">os</span></div>
<div class="ln" style="top:181px">5</div>
<div class="ln" style="top:203px">6</div>
<div class="cl" style="top:203px"><span style="color:#569cd6">def</span> <span style="color:#dcdcaa">select_and_load_excel</span><span style="color:#ffd700">()</span>:</div>
<div class="ln" style="top:225px">7</div>
<div class="cl" style="top:225px">    <span style="color:#6a9955"># 1. <i>小さなメインウィンドウが裏で出ないように隠す</i></span></div>
<div class="ln" style="top:247px">8</div>
<div class="cl" style="top:247px">    <span style="color:#9cdcfe">root</span> = <span style="color:#4ec9b0">tk</span>.<span style="color:#4ec9b0">Tk</span><span style="color:#ffd700">()</span></div>
<div class="ln" style="top:269px">9</div>
<div class="cl" style="top:269px">    <span style="color:#9cdcfe">root</span>.<span style="color:#9cdcfe">withdraw</span><span style="color:#ffd700">()</span></div>
<div class="ln" style="top:291px">10</div>
<div class="ln" style="top:313px">11</div>
<div class="cl" style="top:313px">    <span style="color:#6a9955"># 2. <i>ファイル選択ダイアログを表示</i></span></div>
<div class="ln" style="top:335px">12</div>
<div class="cl" style="top:335px">    <span style="color:#6a9955"># filetypes<i>で</i>Excel<i>ファイル（</i>.xlsx<i>）だけを表示するように制限</i></span></div>
<div class="ln" style="top:357px">13</div>
<div class="cl" style="top:357px">    <span style="color:#9cdcfe">file_path</span> = <span style="color:#4ec9b0">filedialog</span>.<span style="color:#dcdcaa">askopenfilename</span><span style="color:#ffd700">(</span></div>
<div class="ln" style="top:379px">14</div>
<div class="cl" style="top:379px">        <span style="color:#9cdcfe">title</span>=<span style="color:#ce9178">"Excel<i>ファイルを選択してください</i>"</span>,</div>
<div class="ln" style="top:401px">15</div>
<div class="cl" style="top:401px">        <span style="color:#9cdcfe">filetypes</span>=<span style="color:#da70d6">[</span><span style="color:#179fff">(</span><span style="color:#ce9178">"Excel files"</span>, <span style="color:#ce9178">"*.xlsx"</span><span style="color:#179fff">)</span>, <span style="color:#179fff">(</span><span style="color:#ce9178">"All files"</span>, <span style="color:#ce9178">"*.*"</span><span style="color:#179fff">)</span><span style="color:#da70d6">]</span></div>
<div class="ln" style="top:423px">16</div>
<div class="cl" style="top:423px">    <span style="color:#ffd700">)</span></div>
<div class="ln" style="top:445px">17</div>
<div class="ln" style="top:467px">18</div>
<div class="cl" style="top:467px">    <span style="color:#6a9955"># 3. <i>ファイルが選択されたかチェック</i></span></div>
<div class="ln" style="top:489px">19</div>
<div class="cl" style="top:489px">    <span style="color:#c586c0">if</span> <span style="color:#569cd6">not</span> <span style="color:#9cdcfe">file_path</span>:</div>
<div class="ln" style="top:511px">20</div>
<div class="cl" style="top:511px">        <span style="color:#dcdcaa">print</span><span style="color:#ffd700">(</span><span style="color:#ce9178">"<i>ファイルが選択されませんでした。</i>"</span><span style="color:#ffd700">)</span></div>
<div class="ln" style="top:533px">21</div>
<div class="cl" style="top:533px">        <span style="color:#c586c0">return</span></div>
<div class="ln" style="top:555px">22</div>
<div class="ln" style="top:577px">23</div>
<div class="cl" style="top:577px">    <span style="color:#dcdcaa">print</span><span style="color:#ffd700">(</span><span style="color:#569cd6">f</span><span style="color:#ce9178">"<i>選択されたファイル</i>: </span><span style="color:#da70d6">{</span><span style="color:#9cdcfe">file_path</span><span style="color:#da70d6">}</span><span style="color:#ce9178">"</span><span style="color:#ffd700">)</span></div>
<div class="ln" style="top:599px">24</div>
<div class="ln" style="top:621px">25</div>
<div class="cl" style="top:621px">    <span style="color:#6a9955"># 4. Excel<i>を読み込んで表示</i></span></div>
<svg class="b" style="left:1624px;top:92px;opacity:.55" width="110" height="90" viewBox="0 0 110 90"><rect x="0.0" y="0.4" width="6.0" height="1.500" fill="#c586c0"/><rect x="7.0" y="0.4" width="6.0" height="1.500" fill="#4ec9b0"/><rect x="14.0" y="0.4" width="2.0" height="1.500" fill="#c586c0"/><rect x="17.0" y="0.4" width="2.0" height="1.500" fill="#4ec9b0"/><rect x="0.0" y="2.4" width="4.0" height="1.500" fill="#c586c0"/><rect x="5.0" y="2.4" width="7.0" height="1.500" fill="#4ec9b0"/><rect x="13.0" y="2.4" width="6.0" height="1.500" fill="#c586c0"/><rect x="20.0" y="2.4" width="10.0" height="1.500" fill="#4ec9b0"/><rect x="0.0" y="4.4" width="6.0" height="1.500" fill="#c586c0"/><rect x="7.0" y="4.4" width="7.0" height="1.500" fill="#4ec9b0"/><rect x="15.0" y="4.4" width="2.0" height="1.500" fill="#c586c0"/><rect x="18.0" y="4.4" width="2.0" height="1.500" fill="#4ec9b0"/><rect x="0.0" y="6.4" width="6.0" height="1.500" fill="#c586c0"/><rect x="7.0" y="6.4" width="2.0" height="1.500" fill="#4ec9b0"/><rect x="0.0" y="10.4" width="3.0" height="1.500" fill="#569cd6"/><rect x="4.0" y="10.4" width="21.0" height="1.500" fill="#dcdcaa"/><rect x="25.0" y="10.4" width="2.0" height="1.500" fill="#ffd700" fill-opacity=".5"/><rect x="27.0" y="10.4" width="1.0" height="1.500" fill="#cccccc" fill-opacity=".5"/><rect x="4.0" y="12.4" width="1.0" height="1.500" fill="#6a9955"/><rect x="6.0" y="12.4" width="2.0" height="1.500" fill="#6a9955"/><rect x="9.0" y="12.4" width="44.0" height="1.500" fill="#6a9955"/><rect x="4.0" y="14.4" width="4.0" height="1.500" fill="#9cdcfe"/><rect x="9.0" y="14.4" width="1.0" height="1.500" fill="#cccccc" fill-opacity=".5"/><rect x="11.0" y="14.4" width="2.0" height="1.500" fill="#4ec9b0"/><rect x="13.0" y="14.4" width="1.0" height="1.500" fill="#cccccc" fill-opacity=".5"/><rect x="14.0" y="14.4" width="2.0" height="1.500" fill="#4ec9b0"/><rect x="16.0" y="14.4" width="2.0" height="1.500" fill="#ffd700" fill-opacity=".5"/><rect x="4.0" y="16.4" width="4.0" height="1.500" fill="#9cdcfe"/><rect x="8.0" y="16.4" width="1.0" height="1.500" fill="#cccccc" fill-opacity=".5"/><rect x="9.0" y="16.4" width="8.0" height="1.500" fill="#9cdcfe"/><rect x="17.0" y="16.4" width="2.0" height="1.500" fill="#ffd700" fill-opacity=".5"/><rect x="4.0" y="20.4" width="1.0" height="1.500" fill="#6a9955"/><rect x="6.0" y="20.4" width="2.0" height="1.500" fill="#6a9955"/><rect x="9.0" y="20.4" width="28.0" height="1.500" fill="#6a9955"/><rect x="4.0" y="22.4" width="1.0" height="1.500" fill="#6a9955"/><rect x="6.0" y="22.4" width="57.0" height="1.500" fill="#6a9955"/><rect x="4.0" y="24.4" width="9.0" height="1.500" fill="#9cdcfe"/><rect x="14.0" y="24.4" width="1.0" height="1.500" fill="#cccccc" fill-opacity=".5"/><rect x="16.0" y="24.4" width="10.0" height="1.500" fill="#4ec9b0"/><rect x="26.0" y="24.4" width="1.0" height="1.500" fill="#cccccc" fill-opacity=".5"/><rect x="27.0" y="24.4" width="15.0" height="1.500" fill="#dcdcaa"/><rect x="42.0" y="24.4" width="1.0" height="1.500" fill="#ffd700" fill-opacity=".5"/><rect x="8.0" y="26.4" width="5.0" height="1.500" fill="#9cdcfe"/><rect x="13.0" y="26.4" width="1.0" height="1.500" fill="#cccccc" fill-opacity=".5"/><rect x="14.0" y="26.4" width="33.0" height="1.500" fill="#ce9178"/><rect x="47.0" y="26.4" width="1.0" height="1.500" fill="#cccccc" fill-opacity=".5"/><rect x="8.0" y="28.4" width="9.0" height="1.500" fill="#9cdcfe"/><rect x="17.0" y="28.4" width="1.0" height="1.500" fill="#cccccc" fill-opacity=".5"/><rect x="18.0" y="28.4" width="1.0" height="1.500" fill="#da70d6" fill-opacity=".5"/><rect x="19.0" y="28.4" width="1.0" height="1.500" fill="#179fff" fill-opacity=".5"/><rect x="20.0" y="28.4" width="6.0" height="1.500" fill="#ce9178"/><rect x="27.0" y="28.4" width="6.0" height="1.500" fill="#ce9178"/><rect x="33.0" y="28.4" width="1.0" height="1.500" fill="#cccccc" fill-opacity=".5"/><rect x="35.0" y="28.4" width="8.0" height="1.500" fill="#ce9178"/><rect x="43.0" y="28.4" width="1.0" height="1.500" fill="#179fff" fill-opacity=".5"/><rect x="44.0" y="28.4" width="1.0" height="1.500" fill="#cccccc" fill-opacity=".5"/><rect x="46.0" y="28.4" width="1.0" height="1.500" fill="#179fff" fill-opacity=".5"/><rect x="47.0" y="28.4" width="4.0" height="1.500" fill="#ce9178"/><rect x="52.0" y="28.4" width="6.0" height="1.500" fill="#ce9178"/><rect x="58.0" y="28.4" width="1.0" height="1.500" fill="#cccccc" fill-opacity=".5"/><rect x="60.0" y="28.4" width="5.0" height="1.500" fill="#ce9178"/><rect x="65.0" y="28.4" width="1.0" height="1.500" fill="#179fff" fill-opacity=".5"/><rect x="66.0" y="28.4" width="1.0" height="1.500" fill="#da70d6" fill-opacity=".5"/><rect x="4.0" y="30.4" width="1.0" height="1.500" fill="#ffd700" fill-opacity=".5"/><rect x="4.0" y="34.4" width="1.0" height="1.500" fill="#6a9955"/><rect x="6.0" y="34.4" width="2.0" height="1.500" fill="#6a9955"/><rect x="9.0" y="34.4" width="30.0" height="1.500" fill="#6a9955"/><rect x="4.0" y="36.4" width="2.0" height="1.500" fill="#c586c0"/><rect x="7.0" y="36.4" width="3.0" height="1.500" fill="#569cd6"/><rect x="11.0" y="36.4" width="9.0" height="1.500" fill="#9cdcfe"/><rect x="20.0" y="36.4" width="1.0" height="1.500" fill="#cccccc" fill-opacity=".5"/><rect x="8.0" y="38.4" width="5.0" height="1.500" fill="#dcdcaa"/><rect x="13.0" y="38.4" width="1.0" height="1.500" fill="#ffd700" fill-opacity=".5"/><rect x="14.0" y="38.4" width="34.0" height="1.500" fill="#ce9178"/><rect x="48.0" y="38.4" width="1.0" height="1.500" fill="#ffd700" fill-opacity=".5"/><rect x="8.0" y="40.4" width="6.0" height="1.500" fill="#c586c0"/><rect x="4.0" y="44.4" width="5.0" height="1.500" fill="#dcdcaa"/><rect x="9.0" y="44.4" width="1.0" height="1.500" fill="#ffd700" fill-opacity=".5"/><rect x="10.0" y="44.4" width="1.0" height="1.500" fill="#569cd6"/><rect x="11.0" y="44.4" width="20.0" height="1.500" fill="#ce9178"/><rect x="32.0" y="44.4" width="1.0" height="1.500" fill="#da70d6" fill-opacity=".5"/><rect x="33.0" y="44.4" width="9.0" height="1.500" fill="#9cdcfe"/><rect x="42.0" y="44.4" width="1.0" height="1.500" fill="#da70d6" fill-opacity=".5"/><rect x="43.0" y="44.4" width="1.0" height="1.500" fill="#ce9178"/><rect x="44.0" y="44.4" width="1.0" height="1.500" fill="#ffd700" fill-opacity=".5"/><rect x="4.0" y="48.4" width="1.0" height="1.500" fill="#6a9955"/><rect x="6.0" y="48.4" width="2.0" height="1.500" fill="#6a9955"/><rect x="9.0" y="48.4" width="21.0" height="1.500" fill="#6a9955"/><rect x="4.0" y="50.4" width="3.0" height="1.500" fill="#c586c0"/><rect x="7.0" y="50.4" width="1.0" height="1.500" fill="#cccccc" fill-opacity=".5"/><rect x="8.0" y="52.4" width="2.0" height="1.500" fill="#9cdcfe"/><rect x="11.0" y="52.4" width="1.0" height="1.500" fill="#cccccc" fill-opacity=".5"/><rect x="13.0" y="52.4" width="2.0" height="1.500" fill="#4ec9b0"/><rect x="15.0" y="52.4" width="1.0" height="1.500" fill="#cccccc" fill-opacity=".5"/><rect x="16.0" y="52.4" width="10.0" height="1.500" fill="#dcdcaa"/><rect x="26.0" y="52.4" width="1.0" height="1.500" fill="#ffd700" fill-opacity=".5"/><rect x="27.0" y="52.4" width="9.0" height="1.500" fill="#9cdcfe"/><rect x="36.0" y="52.4" width="1.0" height="1.500" fill="#ffd700" fill-opacity=".5"/><rect x="8.0" y="56.4" width="1.0" height="1.500" fill="#6a9955"/><rect x="10.0" y="56.4" width="2.0" height="1.500" fill="#6a9955"/><rect x="13.0" y="56.4" width="29.0" height="1.500" fill="#6a9955"/><rect x="8.0" y="58.4" width="3.0" height="1.500" fill="#c586c0"/><rect x="12.0" y="58.4" width="5.0" height="1.500" fill="#9cdcfe"/><rect x="17.0" y="58.4" width="1.0" height="1.500" fill="#cccccc" fill-opacity=".5"/><rect x="19.0" y="58.4" width="3.0" height="1.500" fill="#9cdcfe"/><rect x="23.0" y="58.4" width="2.0" height="1.500" fill="#c586c0"/><rect x="26.0" y="58.4" width="2.0" height="1.500" fill="#9cdcfe"/><rect x="28.0" y="58.4" width="1.0" height="1.500" fill="#cccccc" fill-opacity=".5"/><rect x="29.0" y="58.4" width="8.0" height="1.500" fill="#dcdcaa"/><rect x="37.0" y="58.4" width="2.0" height="1.500" fill="#ffd700" fill-opacity=".5"/><rect x="39.0" y="58.4" width="1.0" height="1.500" fill="#cccccc" fill-opacity=".5"/><rect x="12.0" y="60.4" width="4.0" height="1.500" fill="#9cdcfe"/><rect x="17.0" y="60.4" width="1.0" height="1.500" fill="#cccccc" fill-opacity=".5"/><rect x="19.0" y="60.4" width="3.0" height="1.500" fill="#9cdcfe"/><rect x="22.0" y="60.4" width="1.0" height="1.500" fill="#ffd700" fill-opacity=".5"/><rect x="23.0" y="60.4" width="6.0" height="1.500" fill="#ce9178"/><rect x="29.0" y="60.4" width="1.0" height="1.500" fill="#ffd700" fill-opacity=".5"/><rect x="12.0" y="62.4" width="5.0" height="1.500" fill="#9cdcfe"/><rect x="18.0" y="62.4" width="1.0" height="1.500" fill="#cccccc" fill-opacity=".5"/><rect x="20.0" y="62.4" width="3.0" height="1.500" fill="#9cdcfe"/><rect x="23.0" y="62.4" width="1.0" height="1.500" fill="#ffd700" fill-opacity=".5"/><rect x="24.0" y="62.4" width="7.0" height="1.500" fill="#ce9178"/><rect x="31.0" y="62.4" width="1.0" height="1.500" fill="#ffd700" fill-opacity=".5"/><rect x="12.0" y="64.4" width="7.0" height="1.500" fill="#9cdcfe"/><rect x="20.0" y="64.4" width="1.0" height="1.500" fill="#cccccc" fill-opacity=".5"/><rect x="22.0" y="64.4" width="3.0" height="1.500" fill="#9cdcfe"/><rect x="25.0" y="64.4" width="1.0" height="1.500" fill="#ffd700" fill-opacity=".5"/><rect x="26.0" y="64.4" width="9.0" height="1.500" fill="#ce9178"/><rect x="35.0" y="64.4" width="1.0" height="1.500" fill="#ffd700" fill-opacity=".5"/><rect x="12.0" y="68.4" width="5.0" height="1.500" fill="#dcdcaa"/><rect x="17.0" y="68.4" width="1.0" height="1.500" fill="#ffd700" fill-opacity=".5"/><rect x="18.0" y="68.4" width="1.0" height="1.500" fill="#569cd6"/><rect x="19.0" y="68.4" width="16.0" height="1.500" fill="#ce9178"/><rect x="36.0" y="68.4" width="9.0" height="1.500" fill="#569cd6"/><rect x="46.0" y="68.4" width="1.0" height="1.500" fill="#ce9178"/><rect x="48.0" y="68.4" width="6.0" height="1.500" fill="#569cd6"/><rect x="55.0" y="68.4" width="2.0" height="1.500" fill="#ce9178"/><rect x="58.0" y="68.4" width="1.0" height="1.500" fill="#ce9178"/><rect x="59.0" y="68.4" width="7.0" height="1.500" fill="#569cd6"/><rect x="66.0" y="68.4" width="2.0" height="1.500" fill="#ce9178"/><rect x="68.0" y="68.4" width="1.0" height="1.500" fill="#ffd700" fill-opacity=".5"/><rect x="4.0" y="72.4" width="6.0" height="1.500" fill="#c586c0"/><rect x="11.0" y="72.4" width="9.0" height="1.500" fill="#4ec9b0"/><rect x="21.0" y="72.4" width="2.0" height="1.500" fill="#c586c0"/><rect x="24.0" y="72.4" width="1.0" height="1.500" fill="#9cdcfe"/><rect x="25.0" y="72.4" width="1.0" height="1.500" fill="#cccccc" fill-opacity=".5"/><rect x="8.0" y="74.4" width="5.0" height="1.500" fill="#dcdcaa"/><rect x="13.0" y="74.4" width="1.0" height="1.500" fill="#ffd700" fill-opacity=".5"/><rect x="14.0" y="74.4" width="1.0" height="1.500" fill="#569cd6"/><rect x="15.0" y="74.4" width="22.0" height="1.500" fill="#ce9178"/><rect x="38.0" y="74.4" width="3.0" height="1.500" fill="#569cd6"/><rect x="41.0" y="74.4" width="1.0" height="1.500" fill="#ce9178"/><rect x="42.0" y="74.4" width="1.0" height="1.500" fill="#ffd700" fill-opacity=".5"/><rect x="0.0" y="78.4" width="1.0" height="1.500" fill="#6a9955"/><rect x="2.0" y="78.4" width="4.0" height="1.500" fill="#6a9955"/><rect x="0.0" y="80.4" width="2.0" height="1.500" fill="#c586c0"/><rect x="3.0" y="80.4" width="8.0" height="1.500" fill="#9cdcfe"/><rect x="12.0" y="80.4" width="2.0" height="1.500" fill="#cccccc" fill-opacity=".5"/><rect x="15.0" y="80.4" width="10.0" height="1.500" fill="#ce9178"/><rect x="25.0" y="80.4" width="1.0" height="1.500" fill="#cccccc" fill-opacity=".5"/><rect x="4.0" y="82.4" width="21.0" height="1.500" fill="#dcdcaa"/><rect x="25.0" y="82.4" width="2.0" height="1.500" fill="#ffd700" fill-opacity=".5"/></svg>
<div class="b" style="left:1736px;top:92px;width:1px;height:554px;background:#101114"></div>
<svg class="b" style="left:1737px;top:90px;" width="13" height="7" viewBox="1737 90 13 7" fill="none" stroke="#ccc" stroke-width="1.1" stroke-linecap="round" stroke-linejoin="round"><rect x="1737" y="92.600" width="13" height="1.600" fill="#8c8c8a" stroke="none"/></svg>
<span class="t" id="t35" style="left:368px;top:655.9px;font-size:12px;color:#9d9d9d;font-weight:500;transform:scaleX(0.9161);">問題</span>
<span class="t" id="t36" style="left:414.7px;top:655.9px;font-size:12px;color:#9d9d9d;font-weight:500;transform:scaleX(0.8661);">出力</span>
<span class="t" id="t37" style="left:459.2px;top:655.9px;font-size:12px;color:#9d9d9d;font-weight:500;transform:scaleX(0.9787);"><b style="margin-right:-14.40px">デバッグ</b> <b style="margin-right:-18.00px">コンソール</b></span>
<span class="t" id="t38" style="left:559.4px;top:655.9px;font-size:12px;color:#ccc;font-weight:500;transform:scaleX(0.9545);"><b style="margin-right:-18.00px">ターミナル</b></span>
<span class="t" id="t39" style="left:623.2px;top:655.9px;font-size:12px;color:#9d9d9d;font-weight:500;transform:scaleX(0.9718);"><b style="margin-right:-10.80px">ポート</b></span>
<div class="b" style="left:558px;top:675px;width:44px;height:1px;background:#0078d4"></div>
<svg class="b" style="left:1615.5px;top:657px;" width="15" height="15" viewBox="0 0 15 15" fill="none" stroke="#ccc" stroke-width="1.1" stroke-linecap="round" stroke-linejoin="round"><rect x="0.8" y="0.8" width="13.400" height="13.400" rx="2"/><path d="M7.5 0.8v13.400"/></svg>
<svg class="b" style="left:1634.8px;top:662.18px;" width="9" height="5.64" viewBox="0 0 9 5.64" fill="none" stroke="#ccc" stroke-width="1.1" stroke-linecap="round" stroke-linejoin="round"><path d="M1 1 L4.5 4.64 L8 1"/></svg>
<svg class="b" style="left:1655.5px;top:662.5px" width="14" height="4" viewBox="0 0 14 4"><g fill="#ccc"><circle cx="3" cy="2" r="0.9"/><circle cx="7" cy="2" r="0.9"/><circle cx="11" cy="2" r="0.9"/></g></svg>
<div class="b" style="left:1681px;top:657px;width:1px;height:15px;background:#444"></div>
<svg class="b" style="left:1694.3px;top:656.9px;" width="14" height="14" viewBox="0 0 14 14" fill="none" stroke="#ccc" stroke-width="1.1" stroke-linecap="round" stroke-linejoin="round"><path d="M1 4.600V2.600A1.600 1.600 0 0 1 2.600 1H4.600M9.400 1h2a1.600 1.600 0 0 1 1.600 1.600v2M13 9.400v2a1.600 1.600 0 0 1-1.600 1.600H9.400M4.600 13H2.600A1.600 1.600 0 0 1 1 11.400V9.400"/></svg>
<svg class="b" style="left:1721.2px;top:657.9px;" width="12" height="12" viewBox="0 0 12 12" fill="none" stroke="#ccc" stroke-width="1.1" stroke-linecap="round" stroke-linejoin="round"><path d="M1.500 1.500l9 9M10.500 1.500l-9 9"/></svg>
<div class="tl" style="top:688px">PS C:\Users\D200404t\Documents\Python> <span style="color:#e5e510">&amp; C:/Users/D200404t/AppData/Local/Microsoft/WindowsApps/python3.13.exe</span> c:/Users/D200404t/Documents/Python/mail-soft-test02.py</div>
<div class="tl" style="top:705px"><i>選択されたファイル</i>: D:/MailSoft/client_list.xlsx</div>
<div class="tl" style="top:722px"><i>データ取得成功</i>: <i>株式会社タマネギ</i> / <i>山田　太郎</i> <i>様</i> (ninjin@py-vbalab.com)</div>
<div class="tl" style="top:739px"><i>データ取得成功</i>: <i>ニンジン株式会社</i> / <i>猫川たま</i> <i>様</i> (ninjin@py-vbalab.com)</div>
<div class="tl" style="top:756px">PS C:\Users\D200404t\Documents\Python&gt; </div>
<div class="b" style="left:641px;top:755px;width:7px;height:17px;background:#ccc"></div>
<div class="b" style="left:357px;top:694px;width:522px;height:90px;box-sizing:border-box;border:5px solid #ed1c24"></div>
<div class="b" style="left:1616px;top:687px;width:1px;height:323px;background:#0a0a0e"></div>
<div class="b" style="left:1616px;top:687px;width:14px;height:1px;background:#0a0a0e"></div>
<div class="b" style="left:1630px;top:681px;width:1px;height:329px;background:#2b2b2b"></div>
<div class="b" style="left:1631px;top:725px;width:119px;height:22px;background:#37373d"></div>
<div class="b" style="left:1631px;top:725px;width:1px;height:22px;background:#0078d4"></div>
<svg class="b" style="left:1642.2px;top:685px;" width="14" height="14" viewBox="0 0 14 14" fill="none" stroke="#ccc" stroke-width="1.15" stroke-linecap="round" stroke-linejoin="round"><rect x="0.700" y="0.700" width="12.600" height="12.600" rx="2"/><path d="M3 4.200l2.800 2.500L3 9.200M6.600 10.200h4"/></svg>
<span class="t" id="t40" style="left:1660.3px;top:682.8px;font-size:13px;color:#ccc;transform:scaleX(1.0071);">powershell</span>
<svg class="b" style="left:1642.2px;top:707px;" width="14" height="14" viewBox="0 0 14 14" fill="none" stroke="#ccc" stroke-width="1.15" stroke-linecap="round" stroke-linejoin="round"><rect x="0.700" y="0.700" width="12.600" height="12.600" rx="2"/><path d="M3 4.200l2.800 2.500L3 9.200M6.600 10.200h4"/></svg>
<span class="t" id="t41" style="left:1660.3px;top:704.8px;font-size:13px;color:#ccc;">Python</span>
<svg class="b" style="left:1642.2px;top:729px;" width="14" height="14" viewBox="0 0 14 14" fill="none" stroke="#ccc" stroke-width="1.15" stroke-linecap="round" stroke-linejoin="round"><rect x="0.700" y="0.700" width="12.600" height="12.600" rx="2"/><path d="M3 4.200l2.800 2.500L3 9.200M6.600 10.200h4"/></svg>
<span class="t" id="t42" style="left:1660.3px;top:726.8px;font-size:13px;color:#ccc;">Python</span>
<svg class="b" style="left:1765.3px;top:51.3px" width="14" height="4" viewBox="0 0 14 4"><g fill="#ccc"><circle cx="3" cy="2" r="0.9"/><circle cx="7" cy="2" r="0.9"/><circle cx="11" cy="2" r="0.9"/></g></svg>
<svg class="b" style="left:1797px;top:45.6px;" width="14" height="14" viewBox="0 0 14 14" fill="none" stroke="#ccc" stroke-width="1.1" stroke-linecap="round" stroke-linejoin="round"><path d="M7 0.800v12.400M0.800 7h12.400"/></svg>
<svg class="b" style="left:1815.5px;top:50.38px;" width="9" height="5.64" viewBox="0 0 9 5.64" fill="none" stroke="#ccc" stroke-width="1.1" stroke-linecap="round" stroke-linejoin="round"><path d="M1 1 L4.5 4.64 L8 1"/></svg>
<svg class="b" style="left:1835.5px;top:45px;" width="15" height="15" viewBox="0 0 15 15" fill="none" stroke="#ccc" stroke-width="1.1" stroke-linecap="round" stroke-linejoin="round"><path d="M13.98 6.24L13.98 8.76L12.09 8.90L11.74 9.75L12.97 11.19L11.19 12.97L9.75 11.74L8.90 12.09L8.76 13.98L6.24 13.98L6.10 12.09L5.25 11.74L3.81 12.97L2.03 11.19L3.26 9.75L2.91 8.90L1.02 8.76L1.02 6.24L2.91 6.10L3.26 5.25L2.03 3.81L3.81 2.03L5.25 3.26L6.10 2.91L6.24 1.02L8.76 1.02L8.90 2.91L9.75 3.26L11.19 2.03L12.97 3.81L11.74 5.25L12.09 6.10Z"/><circle cx="7.500" cy="7.500" r="1.900"/></svg>
<svg class="b" style="left:1862px;top:51.3px" width="14" height="4" viewBox="0 0 14 4"><g fill="#ccc"><circle cx="3" cy="2" r="0.9"/><circle cx="7" cy="2" r="0.9"/><circle cx="11" cy="2" r="0.9"/></g></svg>
<div class="b" style="left:1888px;top:45.5px;width:1px;height:15px;background:#444"></div>
<svg class="b" style="left:1901.3px;top:46px;" width="14" height="13" viewBox="0 0 14 13" fill="none" stroke="#ccc" stroke-width="1.1" stroke-linecap="round" stroke-linejoin="round"><path d="M1 4.200V2.400A1.400 1.400 0 0 1 2.400 1H4.400M9.600 1h2a1.400 1.400 0 0 1 1.400 1.400v1.800M13 8.800v1.800a1.400 1.400 0 0 1-1.400 1.400H9.600M4.400 12H2.400A1.400 1.400 0 0 1 1 10.600V8.800"/></svg>
<span class="t" id="t43" style="left:1771.6px;top:71px;font-size:11px;color:#ccc;font-weight:700;transform:scaleX(1.1270);"><b style="margin-right:-6.60px">セッ</b>...</span>
<svg class="b" style="left:1811.5px;top:73.5px;" width="15" height="15" viewBox="0 0 15 15" fill="none" stroke="#d4d4d4" stroke-width="1.3" stroke-linecap="round" stroke-linejoin="round"><path d="M12.600 4.400A5.600 5.600 0 1 0 13.100 8.600"/><path d="M13 1.400v3.400H9.600"/></svg>
<svg class="b" style="left:1836.8px;top:73.5px;" width="15" height="15" viewBox="0 0 15 15" fill="none" stroke="#d4d4d4" stroke-width="1.3" stroke-linecap="round" stroke-linejoin="round"><circle cx="6.200" cy="6.200" r="4.800"/><path d="M9.800 9.800l4 4"/></svg>
<svg class="b" style="left:1863.5px;top:73.5px;" width="15" height="15" viewBox="0 0 15 15" fill="none" stroke="#d4d4d4" stroke-width="1.3" stroke-linecap="round" stroke-linejoin="round"><path d="M1 1.400h13L9 7.400v5.400l-3-1.600V7.400z"/></svg>
<svg class="b" style="left:1889.5px;top:73.5px;" width="16" height="15" viewBox="0 0 16 15" fill="none" stroke="#d4d4d4" stroke-width="1.3" stroke-linecap="round" stroke-linejoin="round"><rect x="0.800" y="1" width="13.400" height="12.600" rx="2"/><path d="M7.500 1v12.600"/></svg>
<div class="b" style="left:1762.6px;top:103.7px;width:8.8px;height:8.8px;background:#3794ff;border-radius:50%"></div>
<span class="t" id="t44" style="left:1783.4px;top:98px;font-size:13px;color:#ccc;font-weight:500;transform:scaleX(1.0145);"><b style="margin-right:-19.50px">ファイルの</b>問題箇所<b style="margin-right:-3.90px">の</b>...</span>
<span class="t" id="t45" style="left:1783.4px;top:119px;font-size:12px;color:#9d9d9d;transform:scaleX(0.9762);">Complete...</span>
<svg class="b" style="left:1849px;top:123.3px;" width="12" height="11" viewBox="0 0 12 11" fill="none" stroke="#9d9d9d" stroke-width="1.1" stroke-linecap="round" stroke-linejoin="round"><rect x="0.800" y="0.800" width="9.600" height="6.400" rx="0.800"/><path d="M3.200 9.400h4.800M5.600 7.200v2.200"/></svg>
<span class="t" id="t46" style="left:1865.8px;top:119px;font-size:12px;color:#9d9d9d;font-weight:500;transform:scaleX(0.9917);">1 <b style="margin-right:-3.60px">か</b>月前</span>
<div class="b" style="left:1751px;top:873px;width:169px;height:1px;background:#2b2b2b"></div>
<div class="b" style="left:1763px;top:882px;width:145px;height:116px;box-sizing:border-box;background:#313131;border:1px solid #383838;border-radius:5px"></div>
<div class="b" style="left:1770px;top:889px;width:24px;height:20px;box-sizing:border-box;border:1px solid #4a4a4a;border-radius:4px"></div>
<svg class="b" style="left:1772px;top:890px;" width="20" height="18" viewBox="1772 890 20 18" fill="none" stroke="#d0d0d0" stroke-width="1.15" stroke-linecap="round" stroke-linejoin="round"><g transform="rotate(45 1781.900 899)"><path d="M1784 894.800v7.600a2.100 2.100 0 0 1-4.200 0v-9a1.350 1.350 0 0 1 2.700 0v8.400"/></g></svg>
<div class="b" style="left:1770px;top:913px;width:111px;height:20px;box-sizing:border-box;border:1px dashed #565656;border-radius:4px"></div>
<svg class="b" style="left:1774px;top:917px;" width="13" height="13" viewBox="1774 917 13 13" fill="none" stroke="#a0a0a0" stroke-width="1" stroke-linecap="round" stroke-linejoin="round"><path d="M1780.500 918.600v9M1776 923.100h9"/></svg>
<svg class="b" style="left:1791.7px;top:917.8px" width="9.6" height="9.6" viewBox="0 0 24 24"><path fill="#4d9fd0" d="M14.25.18l.9.2.73.26.59.3.45.32.34.34.25.34.16.33.1.3.04.26.02.2-.01.13V8.5l-.05.63-.13.55-.21.46-.26.38-.3.31-.33.25-.35.19-.35.14-.33.1-.3.07-.26.04-.21.02H8.77l-.69.05-.59.14-.5.22-.41.27-.33.32-.27.35-.2.36-.15.37-.1.35-.07.32-.04.27-.02.21v3.06H3.17l-.21-.03-.28-.07-.32-.12-.35-.18-.36-.26-.36-.36-.35-.46-.32-.59-.28-.73-.21-.88-.14-1.05-.05-1.23.06-1.22.16-1.04.24-.87.32-.71.36-.57.4-.44.42-.33.42-.24.4-.16.36-.1.32-.05.24-.01h.16l.06.01h8.16v-.83H6.18l-.01-2.75-.02-.37.05-.34.11-.31.17-.28.25-.26.31-.23.38-.2.44-.18.51-.15.58-.12.64-.1.71-.06.77-.04.84-.02 1.27.05zm-6.3 1.98l-.23.33-.08.41.08.41.23.34.33.22.41.09.41-.09.33-.22.23-.34.08-.41-.08-.41-.23-.33-.33-.22-.41-.09-.41.09zm13.09 3.95l.28.06.32.12.35.18.36.27.36.35.35.47.32.59.28.73.21.88.14 1.04.05 1.23-.06 1.23-.16 1.04-.24.86-.32.71-.36.57-.4.45-.42.33-.42.24-.4.16-.36.09-.32.05-.24.02-.16-.01h-8.22v.82h5.84l.01 2.76.02.36-.05.34-.11.31-.17.29-.25.25-.31.24-.38.2-.44.17-.51.15-.58.13-.64.09-.71.07-.77.04-.84.01-1.27-.04-1.07-.14-.9-.2-.73-.25-.59-.3-.45-.33-.34-.34-.25-.34-.16-.33-.1-.3-.04-.25-.02-.2.01-.13v-5.34l.05-.64.13-.54.21-.46.26-.38.3-.32.33-.24.35-.2.35-.14.33-.1.3-.06.26-.04.21-.02.13-.01h5.84l.69-.05.59-.14.5-.21.41-.28.33-.32.27-.35.2-.36.15-.36.1-.35.07-.32.04-.28.02-.21V6.07h2.09l.14.01zm-6.47 14.25l-.23.33-.08.41.08.41.23.33.33.23.41.08.41-.08.33-.23.23-.33.08-.41-.08-.41-.23-.33-.33-.23-.41-.08-.41.08z"/></svg>
<span class="t" id="t47" style="left:1808.1px;top:913.6px;font-size:12px;color:#b4b4b4;font-style:italic;transform:scaleX(0.9169);width:74.27px;overflow:hidden;">mail-soft-test02.py</span>
<span class="t" id="t48" style="left:1770.5px;top:941.9px;font-size:13px;color:#828282;width:122.26px;overflow:hidden;">コードを調べて理解する</span>
<svg class="b" style="left:1774px;top:972px;" width="18" height="16" viewBox="1774 972 18 16" fill="none" stroke="#d0d0d0" stroke-width="1.1" stroke-linecap="round" stroke-linejoin="round"><rect x="1777" y="975.100" width="10.100" height="7" rx="1"/><path d="M1779.400 984.700h5.300M1782.050 982.100v2.600"/></svg>
<svg class="b" style="left:1795.6px;top:977.276px;" width="9.4" height="5.848" viewBox="0 0 9.4 5.848" fill="none" stroke="#d0d0d0" stroke-width="1.1" stroke-linecap="round" stroke-linejoin="round"><path d="M1 1 L4.7 4.848 L8.4 1"/></svg>
<svg class="b" style="left:1818.2px;top:977.6px" width="14" height="4" viewBox="0 0 14 4"><g fill="#d0d0d0"><circle cx="2.8" cy="2" r="0.95"/><circle cx="7" cy="2" r="0.95"/><circle cx="11.2" cy="2" r="0.95"/></g></svg>
<svg class="b" style="left:1881px;top:971px;" width="18" height="18" viewBox="1881 971 18 18" fill="none" stroke="#a8a8a8" stroke-width="1.1" stroke-linecap="round" stroke-linejoin="round"><path d="M1889.700 973.200v12.400M1883.400 979.400h12.600"/></svg>
<svg class="b" style="left:8px;top:1011px;" width="18" height="20" viewBox="8 1011 18 20" fill="none" stroke="#d0d0d0" stroke-width="1.25" stroke-linecap="round" stroke-linejoin="round"><path d="M11.200 1018.800l4.400 4.300-4.400 4.300M21.100 1014.500l-4.400 4.400 4.400 4.300"/></svg>
<svg class="b" style="left:38px;top:1011px;" width="62" height="20" viewBox="38 1011 62 20" fill="none" stroke="#d0d0d0" stroke-width="1.15" stroke-linecap="round" stroke-linejoin="round"><circle cx="47.800" cy="1020.800" r="6.500"/><path d="M45.300 1018.300l5 5M50.300 1018.300l-5 5"/><path d="M77 1014.600l6.500 11.700h-13z"/><path d="M77 1018.600v4.200M77 1024.500v0.100"/></svg>
<span class="t" id="t49" style="left:59.2px;top:1011.6px;font-size:12px;color:#d0d0d0;transform:scaleX(0.9869);">0</span>
<span class="t" id="t50" style="left:88.5px;top:1011.6px;font-size:12px;color:#d0d0d0;transform:scaleX(0.9720);">0</span>
<span class="t" id="t51" style="left:1282.5px;top:1012px;font-size:12px;color:#d0d0d0;font-weight:500;transform:scaleX(0.9156);">行 1、列 1</span>
<span class="t" id="t52" style="left:1349.8px;top:1012px;font-size:12px;color:#d0d0d0;font-weight:500;transform:scaleX(1.0656);"><b style="margin-right:-14.40px">スペース</b>: 4</span>
<span class="t" id="t53" style="left:1414.2px;top:1012px;font-size:12px;color:#d0d0d0;transform:scaleX(0.9353);">UTF-8</span>
<span class="t" id="t54" style="left:1462px;top:1012px;font-size:12px;color:#d0d0d0;transform:scaleX(0.8487);">CRLF</span>
<svg class="b" style="left:1503px;top:1011px;" width="20" height="20" viewBox="1503 1011 20 20" fill="none" stroke="#d0d0d0" stroke-width="1.2" stroke-linecap="round" stroke-linejoin="round"><path d="M1509.600 1014.700c-1.500 0-2 .6-2 1.900v2c0 1-.5 1.700-1.500 1.900 1 .2 1.500.9 1.500 1.900v2c0 1.300.5 1.900 2 1.900"/><path d="M1514.800 1014.700c1.500 0 2 .6 2 1.900v2c0 1 .5 1.700 1.500 1.900"/><circle cx="1516" cy="1026.100" r="2.900" fill="#d0d0d0" stroke="none"/></svg>
<span class="t" id="t55" style="left:1526px;top:1012px;font-size:12px;color:#d0d0d0;transform:scaleX(0.9904);">Python</span>
<svg class="b" style="left:1577px;top:1012px;" width="21" height="18" viewBox="1577 1012 21 18" fill="none" stroke="#d0d0d0" stroke-width="1.2" stroke-linecap="round" stroke-linejoin="round"><path fill="#d0d0d0" stroke="none" d="M1587.500 1018.200c-4.600 0-8.400 1.200-8.400 4 0 3.200 3.800 5.900 8.400 5.900s8.400-2.700 8.400-5.900c0-2.800-3.800-4-8.400-4z"/><rect x="1584" y="1021" width="7" height="5" rx="1" fill="#181818" stroke="none"/><rect x="1585.400" y="1022.300" width="1.300" height="2.600" fill="#d0d0d0" stroke="none"/><rect x="1588.300" y="1022.300" width="1.300" height="2.600" fill="#d0d0d0" stroke="none"/><rect x="1581.300" y="1014.700" width="5.600" height="5.600" rx="2.200" fill="#181818" stroke="#d0d0d0" stroke-width="1.500"/><rect x="1588.100" y="1014.700" width="5.600" height="5.600" rx="2.200" fill="#181818" stroke="#d0d0d0" stroke-width="1.500"/></svg>
<span class="t" id="t56" style="left:1611.2px;top:1012px;font-size:12px;color:#d0d0d0;transform:scaleX(0.9798);">3.13.12 (Microsoft Store)</span>
<span class="t" id="t57" style="left:1756.7px;top:1012px;font-size:12px;color:#d0d0d0;transform:scaleX(0.9678);">Python 3.13</span>
<svg class="b" style="left:1834px;top:1012px;" width="19" height="18" viewBox="1834 1012 19 18" fill="none" stroke="#d0d0d0" stroke-width="1.1" stroke-linecap="round" stroke-linejoin="round"><path d="M1839.600 1019.500a3.900 3.900 0 0 1 7.800 0v3.600a3.900 3.900 0 0 1-7.800 0z"/><path d="M1841 1017a2.500 2.500 0 0 1 5 0"/><path d="M1839.600 1018.400l-2.600-2.300M1847.400 1018.400l2.600-2.300M1839.600 1021.400h-3.200M1847.400 1021.400h3.200M1840.200 1025.200l-2.800 2.200M1846.800 1025.200l2.800 2.200"/></svg>
<span class="t" id="t58" style="left:1854.7px;top:1012px;font-size:12px;color:#d0d0d0;transform:scaleX(1.0370);">Auto</span>
<svg class="b" style="left:1896px;top:1012px;" width="18" height="18" viewBox="1896 1012 18 18" fill="none" stroke="#d0d0d0" stroke-width="1.1" stroke-linecap="round" stroke-linejoin="round"><path d="M1904 1014.600a4.500 4.500 0 0 0-4.500 4.500v3.600l-1.300 2.600h11.600l-1.300-2.600v-3"/><path d="M1902.600 1026.200a1.500 1.500 0 0 0 2.800 0"/><circle cx="1908.100" cy="1016.800" r="3.200" fill="#d0d0d0" stroke="#181818" stroke-width="0.800"/></svg>
</body></html>
